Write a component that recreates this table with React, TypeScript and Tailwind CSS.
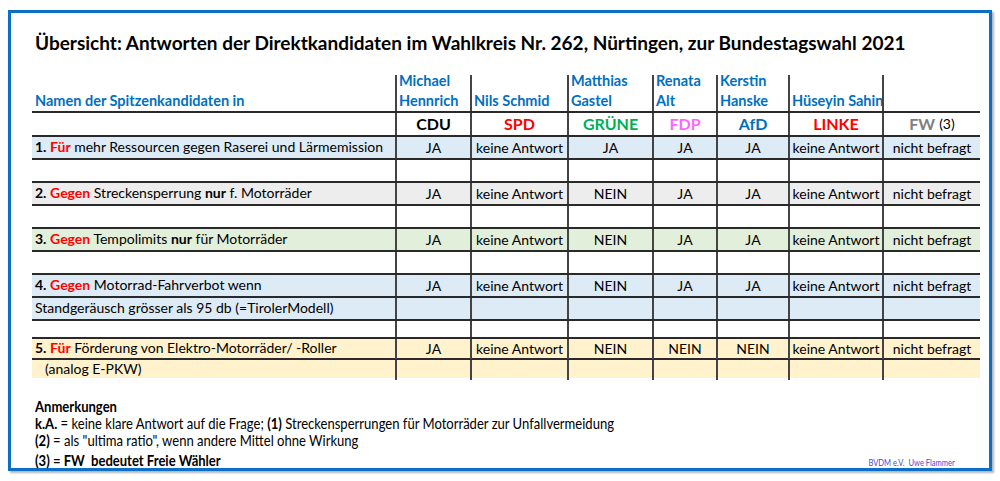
import type { ReactNode } from 'react';

// Spaltenraster: Frage + 7 Kandidaten
const cols = 'grid grid-cols-[363px_75px_97px_85px_64px_72px_94px_98px]';
const vline = 'border-l-2 border-[#444]';
const hline = 'border-b-2 border-[#2a2a2a]';

const candidates = [
  { name: ['Michael', 'Hennrich'], party: 'CDU', color: 'text-black' },
  { name: ['Nils Schmid'], party: 'SPD', color: 'text-[#ff0000]' },
  { name: ['Matthias', 'Gastel'], party: 'GRÜNE', color: 'text-[#00b050]' },
  { name: ['Renata', 'Alt'], party: 'FDP', color: 'text-[#ff66ff]' },
  { name: ['Kerstin', 'Hanske'], party: 'AfD', color: 'text-[#0070c0]' },
  { name: ['Hüseyin Sahin'], party: 'LINKE', color: 'text-[#ff0000]' },
  { name: [], party: 'FW', color: 'text-[#808080]' },
];

const a1 = ['JA', 'keine Antwort', 'JA', 'JA', 'JA', 'keine Antwort', 'nicht befragt'];
const a2 = ['JA', 'keine Antwort', 'NEIN', 'JA', 'JA', 'keine Antwort', 'nicht befragt'];
const a5 = ['JA', 'keine Antwort', 'NEIN', 'NEIN', 'NEIN', 'keine Antwort', 'nicht befragt'];

function Row({
  label,
  answers,
  bg = '',
  h,
  last = false,
}: {
  label?: ReactNode;
  answers?: string[];
  bg?: string;
  h: string;
  last?: boolean;
}) {
  return (
    <div className={`${cols} ${h} ${bg} ${last ? '' : hline}`}>
      <div className="flex items-center pl-[3px] pb-[2px] whitespace-nowrap">{label}</div>
      {Array.from({ length: 7 }).map((_, i) => (
        <div key={i} className={`${vline} flex items-center justify-center whitespace-nowrap`}>
          {answers ? answers[i] : ''}
        </div>
      ))}
    </div>
  );
}

const Red = ({ children }: { children: ReactNode }) => (
  <span className="font-bold text-[#ff0000]">{children}</span>
);

export default function App() {
  return (
    <div className="w-[1000px] h-[481px] bg-white pt-[10px] pl-[8px] font-[Lato,sans-serif] text-black">
      <div className="w-[984px] h-[461px] border-[3px] border-[#0b6fc6] shadow-[2px_2px_2px_rgba(0,0,0,0.3)] pl-[21px] pt-[18px]">
        <h1 className="text-[19px] leading-[24px] font-bold pl-[3px] whitespace-nowrap">
          Übersicht: Antworten der Direktkandidaten im Wahlkreis Nr. 262, Nürtingen, zur Bundestagswahl 2021
        </h1>

        {/* Tabelle */}
        <div className="mt-[20px] w-[948px] text-[14px] leading-[18px]">
          {/* Namen */}
          <div className={`${cols} grid-rows-[36px] h-[38px] ${hline} text-[#0070c0] font-bold text-[14.5px] leading-[20px]`}>
            <div className="flex items-end pl-[3px] whitespace-nowrap">Namen der Spitzenkandidaten in</div>
            {candidates.map((c) => (
              <div key={c.party} className={`${vline} flex flex-col justify-end pl-[2px] whitespace-nowrap`}>
                {c.name.map((n) => (
                  <span key={n}>{n}</span>
                ))}
              </div>
            ))}
          </div>

          {/* Parteien */}
          <div className={`${cols} h-[24px] ${hline} text-[16px] font-bold`}>
            <div />
            {candidates.map((c) => (
              <div key={c.party} className={`${vline} flex items-center justify-center ${c.color}`}>
                {c.party}
                {c.party === 'FW' && <span className="ml-[4px] text-[14px] font-normal text-black">(3)</span>}
              </div>
            ))}
          </div>

          <Row
            h="h-[23px]"
            bg="bg-[#ddebf7]"
            answers={a1}
            label={
              <>
                <b>1.</b>&nbsp;<Red>Für</Red>&nbsp;mehr Ressourcen gegen Raserei und Lärmemission
              </>
            }
          />
          <Row h="h-[23px]" />
          <Row
            h="h-[23px]"
            bg="bg-[#ededed]"
            answers={a2}
            label={
              <>
                <b>2.</b>&nbsp;<Red>Gegen</Red>&nbsp;Streckensperrung&nbsp;<b>nur</b>&nbsp;f. Motorräder
              </>
            }
          />
          <Row h="h-[23px]" />
          <Row
            h="h-[23px]"
            bg="bg-[#e2efda]"
            answers={a2}
            label={
              <>
                <b>3.</b>&nbsp;<Red>Gegen</Red>&nbsp;Tempolimits&nbsp;<b>nur</b>&nbsp;für Motorräder
              </>
            }
          />
          <Row h="h-[23px]" />
          <Row
            h="h-[23px]"
            bg="bg-[#ddebf7]"
            answers={a2}
            label={
              <>
                <b>4.</b>&nbsp;<Red>Gegen</Red>&nbsp;Motorrad-Fahrverbot wenn
              </>
            }
          />
          <Row h="h-[23px]" bg="bg-[#ddebf7]" label="Standgeräusch grösser als 95 db (=TirolerModell)" />
          <Row h="h-[18px]" />
          <Row
            h="h-[21px]"
            bg="bg-[#fff2cc]"
            answers={a5}
            label={
              <>
                <b>5.</b>&nbsp;<Red>Für</Red>&nbsp;Förderung von Elektro-Motorräder/ -Roller
              </>
            }
          />
          <Row h="h-[18px]" bg="bg-[#fff2cc]" last label={<span className="pl-[10px]">(analog E-PKW)</span>} />
        </div>

        {/* Anmerkungen */}
        <div className="mt-[20px] w-[948px] text-[15px] leading-[17px] pl-[3px]">
          <div className="origin-left scale-x-[0.87] whitespace-nowrap font-bold">Anmerkungen</div>
          <div className="origin-left scale-x-[0.87] whitespace-nowrap">
            <b>k.A.</b> = keine klare Antwort auf die Frage; <b>(1)</b> Streckensperrungen für Motorräder zur Unfallvermeidung
          </div>
          <div className="origin-left scale-x-[0.87] whitespace-nowrap">
            <b>(2)</b> = als "ultima ratio", wenn andere Mittel ohne Wirkung
          </div>
          <div className="mt-[3px] flex items-end justify-between">
            <div className="origin-left scale-x-[0.87] whitespace-nowrap font-bold">(3) = FW&nbsp; bedeutet Freie Wähler</div>
            <div className="mr-[25px] origin-right scale-x-[0.84] text-[9px] leading-[12px] text-[#4a4ad0] whitespace-nowrap">
              BVDM e.V.&nbsp; Uwe Flammer
            </div>
          </div>
        </div>
      </div>
    </div>
  );
}
